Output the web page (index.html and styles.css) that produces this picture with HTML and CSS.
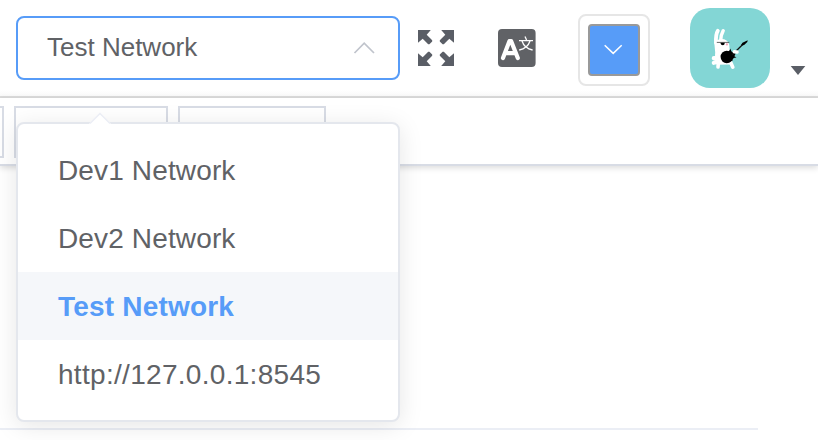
FILE: index.html
```
<!DOCTYPE html>
<html lang="en">
<head>
<meta charset="utf-8">
<title>Network</title>
<link rel="stylesheet" href="styles.css">
</head>
<body>
<header class="navbar">
  <div class="select">
    <span class="select-value">Test Network</span>
    <svg class="select-arrow" width="24" height="16" viewBox="0 0 24 16"><path d="M2.5 13 12.2 3.2 22 13"/></svg>
    <ul class="dropdown">
      <li class="option">Dev1 Network</li>
      <li class="option">Dev2 Network</li>
      <li class="option selected">Test Network</li>
      <li class="option url">http://127.0.0.1:8545</li>
    </ul>
    <svg class="dropdown-tip" width="24" height="14" viewBox="0 0 24 14"><path class="tip-fill" d="M1 14V12L12 1 23 12V14Z"/><path class="tip-line" d="M2 11.5 12 1.5 22 11.5"/></svg>
  </div>
  <svg class="fullscreen" width="36" height="36" viewBox="0 0 36 36">
    <g id="arrow"><path d="M0 0H12.8L8.7 4.7 14.2 10.2V11.4L11.4 14.2H10.2L4.7 8.7 0 12.8Z"/></g>
    <use href="#arrow" transform="matrix(-1 0 0 1 36 0)"/>
    <use href="#arrow" transform="matrix(1 0 0 -1 0 36)"/>
    <use href="#arrow" transform="matrix(-1 0 0 -1 36 36)"/>
  </svg>
  <svg class="language" width="38" height="38" viewBox="0 0 38 38">
    <rect width="37.6" height="38" rx="4"/>
    <path class="letter" d="M5 29.1 11.4 12.2H13.2L19.8 29.1M7.5 24.2H17.5"/>
    <path class="glyph" d="M21 11.6H35M27 7.4 28.6 11M24 12Q26.4 19.4 34.6 21M32 12Q29.6 19.4 21.2 21"/>
  </svg>
  <div class="picker"><div class="swatch">
    <svg width="20" height="12" viewBox="0 0 20 12"><path d="M.7 1.2 9.2 9.4 17.7 1.2"/></svg>
  </div></div>
  <svg class="avatar" width="80" height="80" viewBox="0 0 80 80">
    <rect width="80" height="80" rx="20" fill="#83d6d5"/>
    <g fill="none" stroke="#fff" stroke-linecap="round" stroke-linejoin="round">
      <path d="M27.8 22.8Q25.6 26 26 35" stroke-width="3.8"/>
      <path d="M33.2 22.7Q30.8 27 30.6 33" stroke-width="3.4"/>
      <path d="M28.5 53.5 28 59M40.5 54 42.8 59.2" stroke-width="3.6"/>
      <path d="M23.8 50.2H26M23.8 54.8 27 54" stroke-width="4.2"/>
    </g>
    <path d="M24.2 34Q31 29 36.5 32.5 39.6 35 39.4 39L40 45Q42 52 40 56.5L27 56.8Q24.4 50 25.2 44.5Z" fill="#fff"/>
    <path d="M26.8 34.4H39.3" stroke="#555" stroke-width=".9"/>
    <path d="M30.3 34.7H34.8Q34.6 37.2 32.8 37.2 31 37.2 30.3 34.7Z"/>
    <circle cx="36.9" cy="36.4" r="1.1" fill="#f3a5bb"/>
    <circle cx="36.8" cy="49" r="6.2"/>
    <path d="M36 43.6Q39.5 44 40.2 40.4L41.5 43.4 45.7 45.6 44.4 48.2 46.5 49.6Q42 50 42.4 53L36 52Z"/>
    <path d="M42 47 54 35.3" stroke="#111" stroke-width="1.3"/>
    <path d="m51 37 1.5-2.2 5.2-2.5-.4 1.6-3.2 3-2 .7Z"/>
    <path d="M44.3 43.8 47 44" stroke="#fff" stroke-width="3.5" stroke-linecap="round"/>
  </svg>
  <svg class="caret" width="16" height="10" viewBox="0 0 16 10"><path d="M.7 0H15.3L8 9Z"/></svg>
</header>
<nav class="tags"><span class="tag first"></span><span class="tag second"></span><span class="tag third"></span></nav>
<main class="content"></main>
</body>
</html>
```
FILE: styles.css
```
* { box-sizing: border-box; }
body { margin: 0; height: 440px; overflow: hidden; background: #fff; color: #606266; font-family: "Liberation Sans", Arial, sans-serif; }
svg { display: block; flex: none; }
.navbar { display: flex; height: 98px; padding-left: 16px; align-items: flex-start; border-bottom: 2px solid #dbdbdb; background: linear-gradient(#fff 90px, #f9f9f9); }
.select { position: relative; display: flex; align-items: center; justify-content: space-between; width: 384px; height: 64px; margin-top: 16px; padding: 0 22px 0 29px; border: 2px solid #579cf8; border-radius: 8px; background: #fff; }
.select-value { font-size: 26px; line-height: 60px; padding-bottom: 2px; }
.select-arrow { fill: none; stroke: #c0c4cc; stroke-width: 1.7; }
.dropdown { position: absolute; z-index: 2; left: -2px; top: 104px; width: 384px; height: 300px; margin: 0; padding: 12px 0; list-style: none; background: #fff; border: 2px solid #e4e7ed; border-radius: 8px; box-shadow: 0 4px 24px rgba(0,0,0,.1); }
.option { height: 68px; padding: 1px 0 0 40px; font-size: 28px; line-height: 68px; letter-spacing: .14px; white-space: nowrap; }
.selected { background: #f5f7fa; color: #579cf8; font-weight: 700; letter-spacing: .2px; }
.url { letter-spacing: .3px; }
.dropdown-tip { position: absolute; z-index: 3; left: 70px; top: 94px; }
.tip-fill { fill: #fff; }
.tip-line { fill: none; stroke: #ebeef5; stroke-width: 1.5; }
.fullscreen { margin: 30px 0 0 18px; fill: #5a5e66; }
.language { margin: 29px 0 0 44px; fill: #606266; }
.letter { fill: none; stroke: #fff; stroke-width: 4.2; stroke-linecap: round; stroke-linejoin: round; }
.glyph { fill: none; stroke: #fff; stroke-width: 1.3; }
.picker { width: 72px; height: 72px; margin: 14px 0 0 42px; padding: 8px; border: 2px solid #e6e6e6; border-radius: 8px; background: #fff; }
.swatch { display: grid; place-items: center; height: 52px; border: 2px solid #999; border-radius: 4px; background: #579cf8; }
.swatch path { fill: none; stroke: #fff; stroke-width: 1.5; }
.avatar { margin: 8px 0 0 40px; }
.caret { margin: 66px 0 0 20px; fill: #5a5e66; }
.tags { display: flex; height: 68px; padding-top: 8px; border-bottom: 2px solid #d8dce5; background: #fff; box-shadow: 0 2px 6px rgba(0,0,0,.14); }
.tag { height: 52px; border: 2px solid #d8dce5; }
.first { width: 4px; border-left: 0; }
.second { width: 154px; margin-left: 10px; }
.third { width: 148px; margin-left: 10px; }
.content { width: 758px; height: 264px; border-bottom: 2px solid #ebeef5; }
```
